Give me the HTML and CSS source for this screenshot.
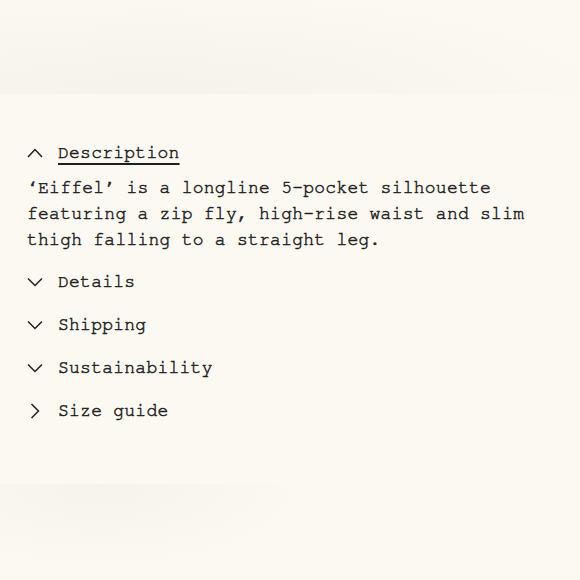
FILE: index.html
```html
<!DOCTYPE html>
<html lang="en">
<head>
  <meta charset="UTF-8" />
  <meta name="viewport" content="width=device-width, initial-scale=1.0" />
  <title>Eiffel - Product info</title>
  <link rel="stylesheet" href="styles.css">
</head>
<body>
  <div class="shade-top"></div>

  <section class="accordion">
    <div class="acc-item open">
      <div class="acc-head">
        <svg class="chev" viewBox="0 0 16 16"><path d="M1 12 L8 4.5 L15 12" /></svg>
        <span class="acc-title">Description</span>
      </div>
      <p class="acc-body">‘Eiffel’ is a longline 5-pocket silhouette featuring a zip fly, high-rise waist and slim thigh falling to a straight leg.</p>
    </div>

    <div class="acc-item">
      <div class="acc-head">
        <svg class="chev" viewBox="0 0 16 16"><path d="M1 4.5 L8 11.5 L15 4.5" /></svg>
        <span class="acc-title">Details</span>
      </div>
    </div>

    <div class="acc-item">
      <div class="acc-head">
        <svg class="chev" viewBox="0 0 16 16"><path d="M1 4.5 L8 11.5 L15 4.5" /></svg>
        <span class="acc-title">Shipping</span>
      </div>
    </div>

    <div class="acc-item">
      <div class="acc-head">
        <svg class="chev" viewBox="0 0 16 16"><path d="M1 4.5 L8 11.5 L15 4.5" /></svg>
        <span class="acc-title">Sustainability</span>
      </div>
    </div>

    <div class="acc-item">
      <div class="acc-head">
        <svg class="chev" viewBox="0 0 16 16"><path d="M4.5 1 L11.5 8 L4.5 15" /></svg>
        <span class="acc-title">Size guide</span>
      </div>
    </div>
  </section>

  <div class="shade-bottom"></div>
</body>
</html>
```
FILE: styles.css
```css
body { margin: 0; background: #fcf9f2; color: #1f1f1f; font-family: "FreeMono", "Courier New", monospace; font-size: 18px; letter-spacing: 0.25px; -webkit-text-stroke: 0.5px #1f1f1f; }
.shade-top { height: 94px; background: radial-gradient(ellipse 480px 110px at 150px 100px, #f5f2ea 0%, #f8f5ee 45%, #fcf9f2 100%); }
.shade-bottom { height: 96px; background: radial-gradient(ellipse 210px 85px at 100px 0, #f6f3ec 0%, #f9f6ef 50%, #fcf9f2 100%); }
.accordion { height: 390px; box-sizing: border-box; padding: 37px 27px 0; }
.acc-head { display: flex; align-items: center; height: 43px; cursor: pointer; }
.chev { width: 16px; height: 16px; flex: none; margin-right: 15px; fill: none; stroke: #1f1f1f; stroke-width: 1.5; }
.acc-title { line-height: 26px; }
.open .acc-title { text-decoration: underline; text-decoration-thickness: 1.5px; text-underline-offset: 5px; }
.acc-body { margin: 1px 0 7px; line-height: 26px; }
```
